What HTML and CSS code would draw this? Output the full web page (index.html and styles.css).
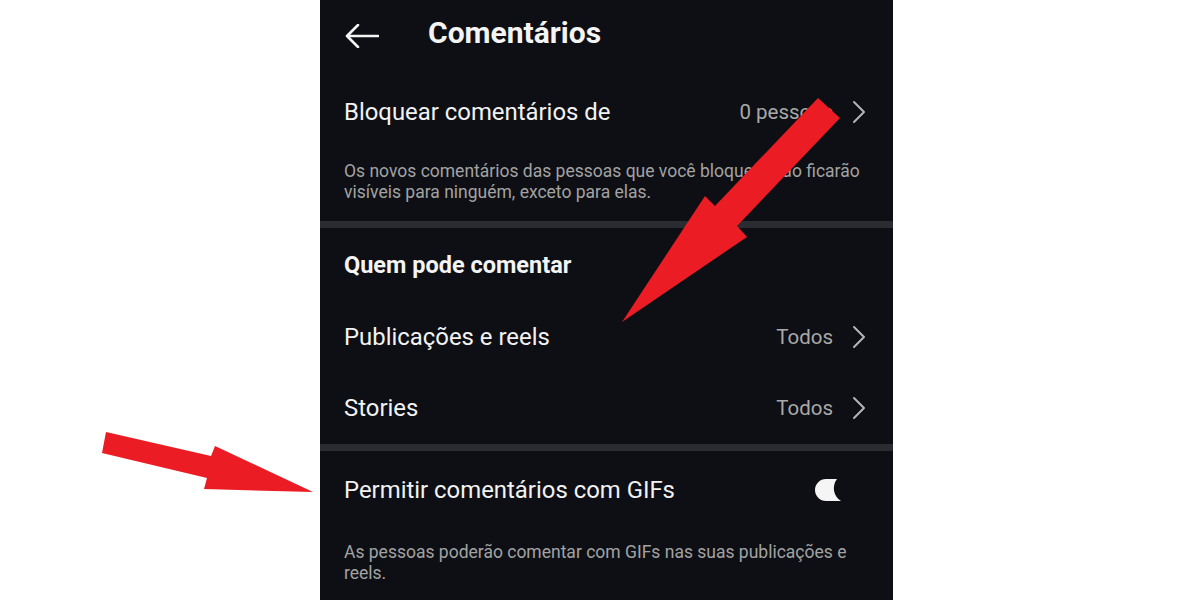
FILE: index.html
```html
<!DOCTYPE html>
<html lang="pt-BR">
<head>
<meta charset="utf-8">
<title>Comentários</title>
<link rel="stylesheet" href="styles.css">
</head>
<body>
<div class="stage">
  <main class="panel">
    <header class="topbar">
      <svg class="back" viewBox="0 0 34 24" width="34" height="24"><path d="M33 12H2M13 1L2 12l11 11" fill="none" stroke="#f4f4f4" stroke-width="2.6" stroke-linecap="round" stroke-linejoin="round"/></svg>
      <h1 class="title">Comentários</h1>
    </header>

    <div class="row row-block">
      <span class="label">Bloquear comentários de</span>
      <span class="value">0 pessoas<svg class="chev" viewBox="0 0 14 24" width="14" height="24"><path d="M2 2l10 10L2 22" fill="none" stroke="#b4b4b4" stroke-width="2" stroke-linecap="round" stroke-linejoin="round"/></svg></span>
    </div>
    <p class="desc desc-block">Os novos comentários das pessoas que você bloquear não ficarão visíveis para ninguém, exceto para elas.</p>

    <div class="divider"></div>

    <h2 class="section">Quem pode comentar</h2>
    <div class="row row-posts">
      <span class="label">Publicações e reels</span>
      <span class="value">Todos<svg class="chev" viewBox="0 0 14 24" width="14" height="24"><path d="M2 2l10 10L2 22" fill="none" stroke="#b4b4b4" stroke-width="2" stroke-linecap="round" stroke-linejoin="round"/></svg></span>
    </div>
    <div class="row row-stories">
      <span class="label">Stories</span>
      <span class="value">Todos<svg class="chev" viewBox="0 0 14 24" width="14" height="24"><path d="M2 2l10 10L2 22" fill="none" stroke="#b4b4b4" stroke-width="2" stroke-linecap="round" stroke-linejoin="round"/></svg></span>
    </div>

    <div class="divider"></div>

    <div class="row row-gifs">
      <span class="label">Permitir comentários com GIFs</span>
      <svg class="toggle" viewBox="0 0 28 24" width="28" height="24"><path d="M23 1H12A11 11 0 0 0 12 23H27A15 15 0 0 1 23 1Z" fill="#f5f5f5"/></svg>
    </div>
    <p class="desc desc-gifs">As pessoas poderão comentar com GIFs nas suas publicações e reels.</p>
  </main>

  <svg class="arrows" viewBox="0 0 1200 600" width="1200" height="600">
    <polygon points="622,322 705,196 715,206 818,98 840,118 737,226 747,237" fill="#ec1c24"/>
    <polygon points="106,432 211,456 215,446 313,492 204,489 207,478 102,453" fill="#ec1c24"/>
  </svg>
</div>
</body>
</html>
```

FILE: styles.css
```css
* { box-sizing: border-box; }

html, body {
  margin: 0;
  padding: 0;
  background: #ffffff;
}

body {
  font-family: Roboto, "Noto Sans", "Liberation Sans", sans-serif;
}

.stage {
  position: relative;
  width: 1200px;
  height: 600px;
  overflow: hidden;
}

.panel {
  margin-left: 320px;
  width: 573px;
  height: 600px;
  background: #0d0f14;
  color: #f2f2f2;
  display: flex;
  flex-direction: column;
  overflow: hidden;
}

.topbar {
  height: 65px;
  display: flex;
  align-items: center;
  padding-left: 25px;
  gap: 49px;
  flex-shrink: 0;
}

.back {
  display: block;
  margin-top: 6px;
}

.title {
  margin: 0;
  font-size: 30px;
  font-weight: 700;
  color: #f4f4f4;
}

.row {
  display: flex;
  align-items: center;
  justify-content: space-between;
  padding: 0 27px 0 24px;
  flex-shrink: 0;
}

.label {
  font-size: 23.9px;
  color: #f2f2f2;
}

.value {
  display: flex;
  align-items: center;
  gap: 19px;
  font-size: 20.5px;
  color: #a9a9a9;
}

.chev {
  display: block;
}

.row-block { height: 94px; }
.row-posts { height: 70px; }
.row-stories { height: 72px; }
.row-gifs { height: 78px; padding-right: 51px; }

.toggle { display: block; }

.desc {
  margin: 0;
  padding: 0 28px 0 24px;
  font-size: 17.5px;
  line-height: 21px;
  color: #a3a3a3;
  flex-shrink: 0;
}

.desc-block {
  padding-top: 2px;
  height: 62px;
}

.desc-gifs {
  padding-top: 13px;
}

.divider {
  height: 7px;
  background: #2a2c31;
  flex-shrink: 0;
}

.section {
  margin: 0;
  height: 74px;
  display: flex;
  align-items: center;
  padding-left: 24px;
  font-size: 23.5px;
  font-weight: 700;
  color: #f4f4f4;
  flex-shrink: 0;
}

.arrows {
  position: absolute;
  left: 0;
  top: 0;
  pointer-events: none;
}
```
